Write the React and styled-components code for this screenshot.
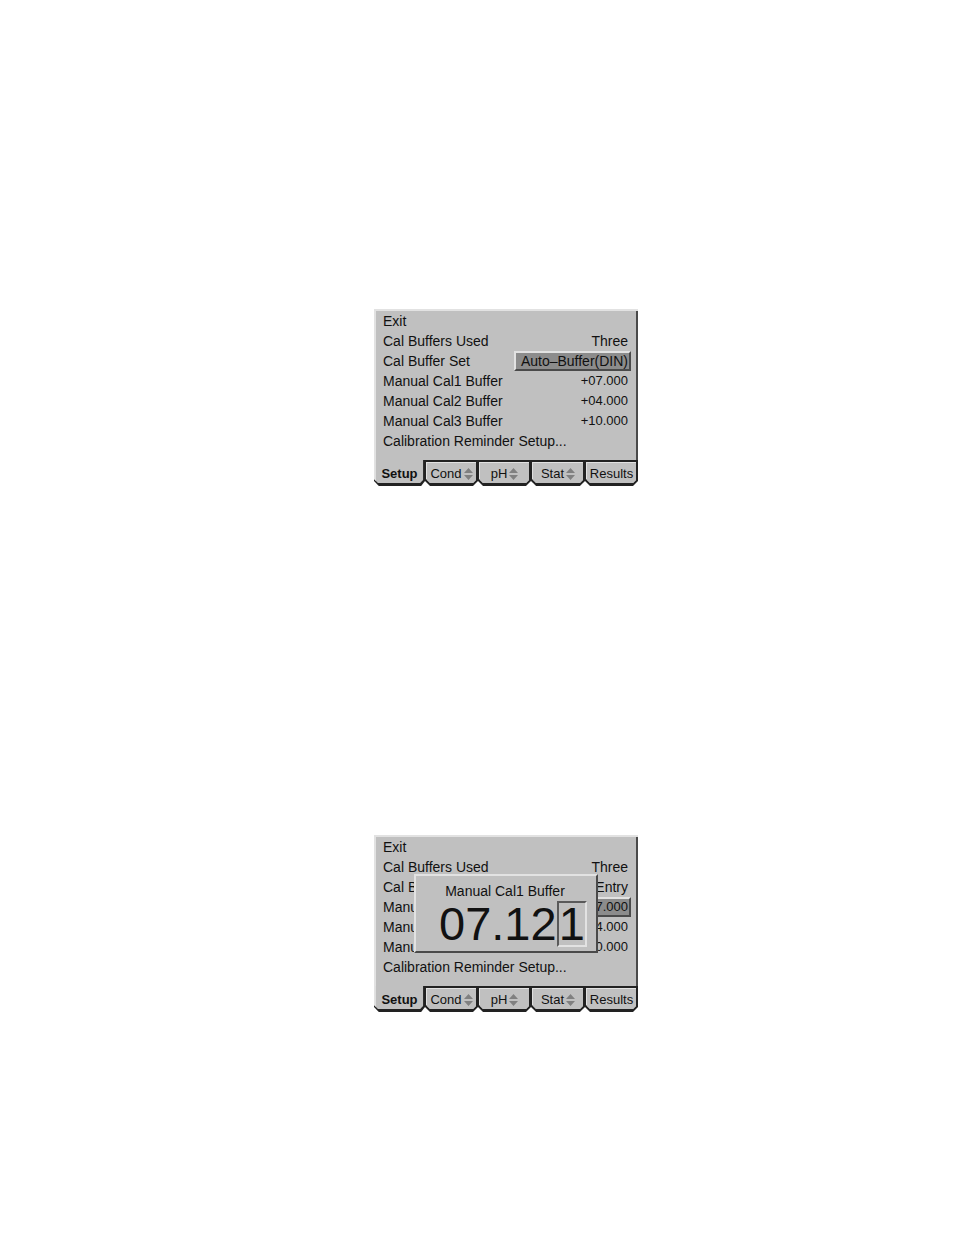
import React from "react";
import styled, { createGlobalStyle } from "styled-components";

const Global = createGlobalStyle`
  body { margin: 0; background: #fff; color: #111; font-family: "Liberation Sans", Arial, sans-serif; }
  * { box-sizing: border-box; }
`;

const Page = styled.main`
  display: flex;
  flex-direction: column;
  align-items: center;
  gap: 349px;
  padding: 309px 0 223px 58px;
`;

const Device = styled.section`
  position: relative;
  width: 264px;
  max-width: 100%;
`;

const Menu = styled.div`
  padding: 0 7px 9px 7px;
  background: #c0c0c0;
  border: solid #e2e2e2;
  border-width: 2px 0 0 2px;
  box-shadow: inset -2px 0 #4a4a4a;
`;

const Row = styled.button`
  display: flex;
  justify-content: space-between;
  align-items: center;
  width: 100%;
  height: 20px;
  padding: 0;
  border: 0;
  background: none;
  color: inherit;
  font: 14px/20px "Liberation Sans", Arial, sans-serif;
  text-align: left;
  white-space: nowrap;
`;

const Value = styled.span`
  padding: 0 1px 0 5px;
  font-size: ${(p) => (p.$numeric ? "13px" : "14px")};
  line-height: 16px;
  border: 2px solid transparent;
  ${(p) =>
    p.$selected &&
    `background: #8c8c8c; border-color: #e2e2e2 #4a4a4a #4a4a4a #e2e2e2;`}
`;

const Tabs = styled.nav`
  display: grid;
  grid-template-columns: 51px 53px 53px 54px 53px;
  height: 26px;
`;

const Tab = styled.button`
  position: relative;
  display: flex;
  align-items: center;
  justify-content: center;
  gap: 2px;
  padding: 1px 0 0;
  border: 0;
  background: none;
  color: inherit;
  font: ${(p) => (p.$active ? "bold" : "normal")} 13px/24px "Liberation Sans", Arial, sans-serif;
`;

const TabShape = styled.svg`
  position: absolute;
  inset: 0;
  width: 100%;
  height: 100%;
`;

const TabText = styled.span`
  position: relative;
`;

const Arrows = styled.svg`
  position: relative;
  flex: none;
`;

const Dialog = styled.div`
  position: absolute;
  top: 39px;
  left: 40px;
  width: 184px;
  padding: 5px 11px 4px 23px;
  background: #c0c0c0;
  border: 2px solid;
  border-color: #e2e2e2 #4a4a4a #4a4a4a #e2e2e2;
`;

const DialogTitle = styled.div`
  padding-right: 14px;
  font-size: 14px;
  line-height: 20px;
  text-align: center;
  white-space: nowrap;
`;

const Entry = styled.div`
  display: flex;
  font-size: 47px;
  line-height: 46px;
`;

const Digit = styled.span`
  line-height: 42px;
  border: 2px solid;
  border-color: #5a5a5a #e2e2e2 #e2e2e2 #5a5a5a;
`;

function TabOutline({ active }) {
  return (
    <TabShape viewBox="0 0 53 26" preserveAspectRatio="none" aria-hidden="true">
      {active ? (
        <>
          <path d="M0 0H53V21L49 26H5L0 21Z" fill="#222" />
          <path d="M0 0H51V20L48 23H4L0 19Z" fill="#c0c0c0" />
          <path d="M0 0H2V21L0 19Z" fill="#e2e2e2" />
        </>
      ) : (
        <>
          <path d="M0 0H53V21L48 26H5L0 21Z" fill="#222" />
          <path d="M1 2H51V20L48 23H5L1 19Z" fill="#e2e2e2" />
          <path d="M2 3H51V20L48 23H5L2 20Z" fill="#c0c0c0" />
        </>
      )}
    </TabShape>
  );
}

function Screen({ rows, children }) {
  const tabs = [["Setup"], ["Cond", true], ["pH", true], ["Stat", true], ["Results"]];
  return (
    <Device>
      <Menu>
        {rows.map(([label, value, selected]) => (
          <Row key={label} type="button">
            <span>{label}</span>
            {value && (
              <Value $selected={selected} $numeric={value[0] === "+"}>{value}</Value>
            )}
          </Row>
        ))}
      </Menu>
      <Tabs>
        {tabs.map(([name, arrows], i) => (
          <Tab key={name} type="button" $active={i === 0}>
            <TabOutline active={i === 0} />
            <TabText>{name}</TabText>
            {arrows && (
              <Arrows width="9" height="12" viewBox="0 0 9 12" aria-hidden="true">
                <path d="M4.5 0 9 5H0ZM0 7H9L4.5 12Z" fill="#808080" />
              </Arrows>
            )}
          </Tab>
        ))}
      </Tabs>
      {children}
    </Device>
  );
}

const menu = (set, selected) => [
  ["Exit"],
  ["Cal Buffers Used", "Three"],
  ["Cal Buffer Set", set, selected === 2],
  ["Manual Cal1 Buffer", "+07.000", selected === 3],
  ["Manual Cal2 Buffer", "+04.000"],
  ["Manual Cal3 Buffer", "+10.000"],
  ["Calibration Reminder Setup..."],
];

export default function App() {
  return (
    <>
      <Global />
      <Page>
        <Screen rows={menu("Auto–Buffer(DIN)", 2)} />
        <Screen rows={menu("Manual Entry", 3)}>
          <Dialog role="dialog" aria-label="Manual Cal1 Buffer">
            <DialogTitle>Manual Cal1 Buffer</DialogTitle>
            <Entry>
              <span>07.12</span>
              <Digit>1</Digit>
            </Entry>
          </Dialog>
        </Screen>
      </Page>
    </>
  );
}
